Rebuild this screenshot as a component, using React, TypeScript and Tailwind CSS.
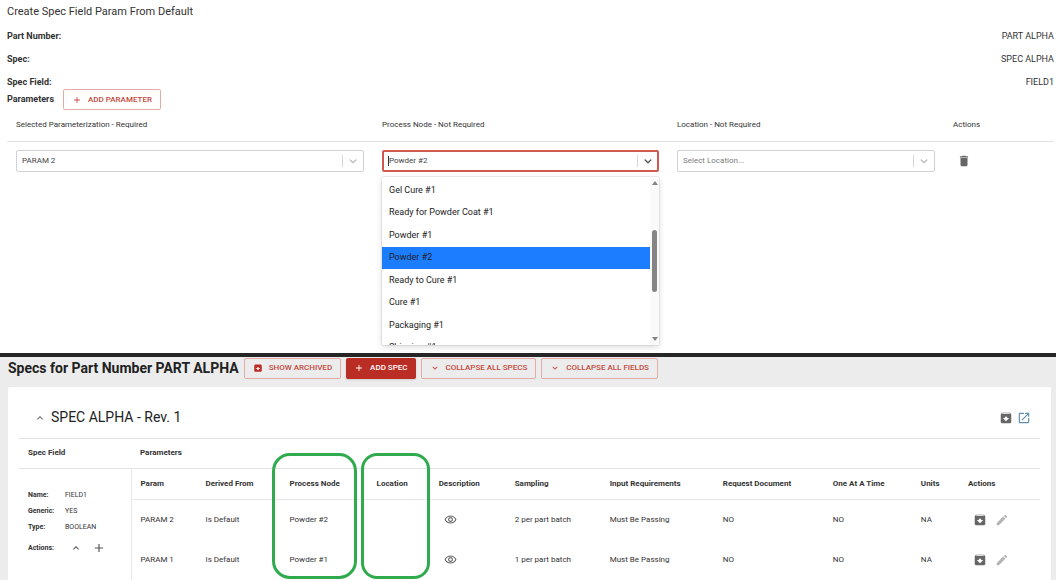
import { useState } from 'react';
import type { ReactNode } from 'react';
import {
  MdAdd,
  MdArchive,
  MdDelete,
  MdEdit,
  MdExpandLess,
  MdExpandMore,
  MdOpenInNew,
  MdOutlineRemoveRedEye,
} from 'react-icons/md';

interface SpecParam {
  name: string;
  derivedFrom: string;
  processNode: string;
  location: string;
  sampling: string;
}

const NODES = [
  'Gel Cure #1',
  'Ready for Powder Coat #1',
  'Powder #1',
  'Powder #2',
  'Ready to Cure #1',
  'Cure #1',
  'Packaging #1',
  'Shipping #1',
];

const SUMMARY = [
  { label: 'Part Number:', value: 'PART ALPHA' },
  { label: 'Spec:', value: 'SPEC ALPHA' },
  { label: 'Spec Field:', value: 'FIELD1' },
];

const PARAMS: SpecParam[] = [
  { name: 'PARAM 2', derivedFrom: 'Is Default', processNode: 'Powder #2', location: '', sampling: '2 per part batch' },
  { name: 'PARAM 1', derivedFrom: 'Is Default', processNode: 'Powder #1', location: '', sampling: '1 per part batch' },
];

function Chevron() {
  return (
    <svg className="w-3 h-3" viewBox="0 0 20 20" fill="currentColor" aria-hidden="true">
      <path d="M4.516 7.548c0.436-0.446 1.043-0.481 1.576 0l3.908 3.747 3.908-3.747c0.533-0.481 1.141-0.446 1.574 0 0.436 0.445 0.408 1.197 0 1.615-0.406 0.418-4.695 4.502-4.695 4.502-0.217 0.223-0.502 0.335-0.787 0.335s-0.57-0.112-0.789-0.335c0 0-4.287-4.084-4.695-4.502s-0.436-1.17 0-1.615z" />
    </svg>
  );
}

function SelectBox({ label, children, muted }: { label: string; children: ReactNode; muted?: boolean }) {
  return (
    <div className="flex h-[22px] items-center rounded-xs border border-[#d2d2d2]">
      <select
        aria-label={label}
        className={`min-w-0 flex-1 appearance-none pl-[5px] text-[8px] leading-4 outline-none ${muted ? 'text-[#7d7d7d]' : 'text-[#444]'}`}
      >
        {children}
      </select>
      <span className="flex h-3 items-center border-l border-[#d6d6d6] px-1 text-[#bdbdbd]">
        <Chevron />
      </span>
    </div>
  );
}

function OutlineButton({ icon, children }: { icon: ReactNode; children: ReactNode }) {
  return (
    <button
      type="button"
      className="flex h-[21px] items-center gap-[6px] rounded-xs border border-[#e3aca7] px-2 text-[8px] font-medium text-[#c4483d]"
    >
      {icon}
      {children}
    </button>
  );
}

function ProcessNodeSelect() {
  const [value, setValue] = useState('Powder #2');

  return (
    <div className="relative">
      <div className="flex h-[22px] items-center rounded-xs border-2 border-[#cf5a50]">
        <div className="ml-[4px] h-[10px] w-px bg-[#333]" />
        <input
          role="combobox"
          aria-label="Process Node"
          aria-expanded="true"
          aria-controls="node-list"
          className="min-w-0 flex-1 text-[8px] leading-4 text-[#444] outline-none"
          value={value}
          onChange={(e) => setValue(e.target.value)}
        />
        <span className="flex h-3 items-center border-l border-[#d6d6d6] pl-1 pr-[3px] text-[#555]">
          <Chevron />
        </span>
      </div>

      {/* open menu */}
      <div className="absolute inset-x-0 top-[27px] z-10 flex h-[168px] overflow-hidden rounded-xs bg-white pt-[2px] shadow-[0_0_0_1px_rgba(0,0,0,0.06),0_2px_6px_rgba(0,0,0,0.15)]">
        <ul id="node-list" role="listbox" className="flex h-[180px] min-w-0 flex-1 flex-col">
          {NODES.map((node) => (
            <li
              key={node}
              role="option"
              aria-selected={node === value}
              onClick={() => setValue(node)}
              className={`flex flex-1 items-center px-[7px] text-[9px] text-[#222] ${node === value ? 'bg-[#1c7dff]' : ''}`}
            >
              {node}
            </li>
          ))}
        </ul>
        <div className="flex w-[9px] flex-col items-center justify-between bg-[#fafafa] pt-[2px] pb-1">
          <svg className="h-1 w-[6px]" viewBox="0 0 6 4" fill="#858585"><path d="M3 0 6 4H0z" /></svg>
          <div className="h-[62px] w-[5px] rounded-full bg-[#858585]" />
          <svg className="h-1 w-[6px]" viewBox="0 0 6 4" fill="#858585"><path d="M0 0h6L3 4z" /></svg>
        </div>
      </div>
    </div>
  );
}

function CreateParam() {
  return (
    <section className="min-h-[353px] bg-white pl-[7px] pr-[2px] pt-1 text-[#333]">
      <h1 className="text-[11px] leading-4">Create Spec Field Param From Default</h1>
      <dl className="flex flex-col gap-[10px] pt-[10px]">
        {SUMMARY.map((row) => (
          <div key={row.label} className="flex justify-between text-[9px] leading-[13px]">
            <dt className="font-bold">{row.label}</dt>
            <dd>{row.value}</dd>
          </div>
        ))}
      </dl>
      <div className="flex items-center gap-[9px]">
        <h2 className="text-[9px] font-bold">Parameters</h2>
        <OutlineButton icon={<MdAdd className="h-[10px] w-[10px]" />}>ADD PARAMETER</OutlineButton>
      </div>

      <table className="w-full table-fixed text-left text-[8px]">
        <colgroup>
          <col className="w-[366px]" />
          <col className="w-[295px]" />
          <col className="w-[276px]" />
          <col className="w-[110px]" />
        </colgroup>
        <thead>
          <tr className="h-[31px] border-b border-[#e2e2e2]">
            <th className="px-[9px] font-normal">Selected Parameterization - Required</th>
            <th className="px-[9px] font-normal">Process Node - Not Required</th>
            <th className="px-[9px] font-normal">Location - Not Required</th>
            <th className="px-[9px] font-normal">Actions</th>
          </tr>
        </thead>
        <tbody>
          <tr className="h-10">
            <td className="px-[9px]">
              <SelectBox label="Selected Parameterization">
                <option>PARAM 2</option>
                <option>PARAM 1</option>
              </SelectBox>
            </td>
            <td className="px-[9px]">
              <ProcessNodeSelect />
            </td>
            <td className="px-[9px]">
              <SelectBox label="Location" muted>
                <option>Select Location...</option>
              </SelectBox>
            </td>
            <td className="px-[9px]">
              <button type="button" aria-label="Delete parameter" className="block pl-1 text-[#666]">
                <MdDelete className="h-[14px] w-[14px]" />
              </button>
            </td>
          </tr>
        </tbody>
      </table>
    </section>
  );
}

// ring drawn around a highlighted column
function ColumnRing({ className }: { className: string }) {
  return (
    <span
      className={`pointer-events-none absolute -top-4 h-[126px] border-[3px] border-[#2fab4e] ${className}`}
    />
  );
}

function ParamTable() {
  return (
    <table className="w-full table-fixed text-left text-[8px]">
      <colgroup>
        <col className="w-[65px]" />
        <col className="w-[84px]" />
        <col className="w-[87px]" />
        <col className="w-[62px]" />
        <col className="w-[76px]" />
        <col className="w-[95px]" />
        <col className="w-[113px]" />
        <col className="w-[110px]" />
        <col className="w-[88px]" />
        <col className="w-[47px]" />
        <col className="w-[81px]" />
      </colgroup>
      <thead>
        <tr className="h-[31px] border-b border-[#e8e8e8] whitespace-nowrap">
          <th className="pl-[9px]">Param</th>
          <th className="pl-[9px]">Derived From</th>
          <th className="relative pl-[9px]">
            Process Node
            <ColumnRing className="-left-[9px] right-[11px] rounded-[18px]" />
          </th>
          <th className="relative pl-[9px]">
            Location
            <ColumnRing className="-left-[7px] right-0 rounded-[16px]" />
          </th>
          <th className="pl-[9px]">Description</th>
          <th className="pl-[9px]">Sampling</th>
          <th className="pl-[9px]">Input Requirements</th>
          <th className="pl-[9px]">Request Document</th>
          <th className="pl-[9px]">One At A Time</th>
          <th className="pl-[9px]">Units</th>
          <th className="pl-[9px]">Actions</th>
        </tr>
      </thead>
      <tbody>
        {PARAMS.map((param) => (
          <tr key={param.name} className="h-10 whitespace-nowrap">
            <td className="pl-[9px]">{param.name}</td>
            <td className="pl-[9px]">{param.derivedFrom}</td>
            <td className="pl-[9px]">{param.processNode}</td>
            <td className="pl-[9px]">{param.location}</td>
            <td className="pl-[9px]">
              <button type="button" aria-label="View description" className="block pl-[5px] text-[#666]">
                <MdOutlineRemoveRedEye className="h-[13px] w-[13px]" />
              </button>
            </td>
            <td className="pl-[9px]">{param.sampling}</td>
            <td className="pl-[9px]">Must Be Passing</td>
            <td className="pl-[9px]">NO</td>
            <td className="pl-[9px]">NO</td>
            <td className="pl-[9px]">NA</td>
            <td className="pl-[9px]">
              <div className="flex gap-2 pl-[5px]">
                <button type="button" aria-label="Archive" className="text-[#666]">
                  <MdArchive className="h-[14px] w-[14px]" />
                </button>
                <button type="button" aria-label="Edit" className="text-[#b5b5b5]">
                  <MdEdit className="h-[14px] w-[14px]" />
                </button>
              </div>
            </td>
          </tr>
        ))}
      </tbody>
    </table>
  );
}

function Specs() {
  return (
    <section className="border-t-4 border-[#262626] bg-[#ececec] pl-2 pr-[5px] text-[#333]">
      <div className="flex items-center gap-[5px]">
        <h2 className="text-[14px] leading-[22px] font-bold text-[#222]">Specs for Part Number PART ALPHA</h2>
        <OutlineButton icon={<MdArchive className="h-[10px] w-[10px] text-[#b92d25]" />}>SHOW ARCHIVED</OutlineButton>
        <button
          type="button"
          className="flex h-[21px] items-center gap-[6px] rounded-xs bg-[#b92d25] px-2 text-[8px] font-medium text-white shadow"
        >
          <MdAdd className="h-[10px] w-[10px]" />
          ADD SPEC
        </button>
        <OutlineButton icon={<MdExpandMore className="h-[10px] w-[10px]" />}>COLLAPSE ALL SPECS</OutlineButton>
        <OutlineButton icon={<MdExpandMore className="h-[10px] w-[10px]" />}>COLLAPSE ALL FIELDS</OutlineButton>
      </div>

      <div className="mt-2 rounded-t-xs bg-white px-[11px]">
        <div className="flex h-[52px] items-center border-b border-[#e2e2e2] pl-[15px] pr-[9px] pt-[10px]">
          <button type="button" aria-label="Collapse spec" className="text-[#666]">
            <MdExpandLess className="h-3 w-3" />
          </button>
          <h3 className="pl-[5px] text-[14px] text-[#222]">SPEC ALPHA - Rev. 1</h3>
          <div className="ml-auto flex gap-1">
            <button type="button" aria-label="Archive spec" className="text-[#666]">
              <MdArchive className="h-[14px] w-[14px]" />
            </button>
            <a href="#spec" aria-label="Open spec" className="text-[#5f8fae]">
              <MdOpenInNew className="h-[14px] w-[14px]" />
            </a>
          </div>
        </div>

        <table className="w-full table-fixed text-left text-[8px]">
          <colgroup>
            <col className="w-[112px]" />
            <col />
          </colgroup>
          <thead>
            <tr className="h-[29px] border-b border-[#e2e2e2]">
              <th className="pl-[9px]">Spec Field</th>
              <th className="pl-[9px]">Parameters</th>
            </tr>
          </thead>
          <tbody>
            <tr className="border-b border-[#e2e2e2]">
              <td className="border-r border-[#e8e8e8] pb-[6px] pl-[9px]">
                <dl className="grid grid-cols-[37px_1fr] text-[7px] leading-4">
                  <dt className="font-bold">Name:</dt>
                  <dd>FIELD1</dd>
                  <dt className="font-bold">Generic:</dt>
                  <dd>YES</dd>
                  <dt className="font-bold">Type:</dt>
                  <dd>BOOLEAN</dd>
                </dl>
                <div className="flex items-center pt-[5px] text-[7px] leading-4">
                  <span className="w-[42px] font-bold">Actions:</span>
                  <button type="button" aria-label="Collapse field" className="text-[#555]">
                    <MdExpandLess className="h-3 w-3" />
                  </button>
                  <button type="button" aria-label="Add param" className="pl-[10px] text-[#555]">
                    <MdAdd className="h-[14px] w-[14px]" />
                  </button>
                </div>
              </td>
              <td>
                <ParamTable />
              </td>
            </tr>
          </tbody>
        </table>
      </div>
    </section>
  );
}

export default function App() {
  return (
    <main className="font-['Roboto',sans-serif]">
      <CreateParam />
      <Specs />
    </main>
  );
}
